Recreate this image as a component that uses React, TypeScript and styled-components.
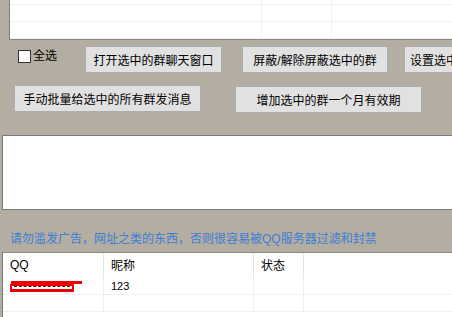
import styled, { createGlobalStyle } from 'styled-components';

const GlobalStyle = createGlobalStyle`
  html, body {
    margin: 0;
    padding: 0;
    background: #b3ada2;
  }
  body {
    font-family: "Liberation Sans", "Noto Sans CJK SC", sans-serif;
    font-size: 12px;
    color: #000;
  }
`;

const Page = styled.div`
  width: 452px;
  height: 317px;
  overflow: hidden;
  display: flex;
  flex-direction: column;
`;

const TopGrid = styled.div`
  margin-left: 9px;
  width: 460px;
  height: 39px;
  border-left: 1px solid #7c7c7c;
  border-bottom: 1px solid #8a8a8a;
  background: #fff;
  display: flex;
  flex-direction: column;
  justify-content: flex-end;
  overflow: hidden;
`;

const GridRow = styled.div`
  display: flex;
  flex: 0 0 17px;
  box-sizing: border-box;
  border-bottom: 1px solid #f0f0f0;
`;

const Cell = styled.div<{ $w?: number }>`
  box-sizing: border-box;
  flex: ${(p) => (p.$w ? `0 0 ${p.$w}px` : '1')};
  border-right: ${(p) => (p.$w ? '1px solid #f0f0f0' : 'none')};
  padding-left: 7px;
  display: flex;
  align-items: center;
  white-space: nowrap;
  position: relative;
`;

const ButtonRow = styled.div<{ $top: number; $left: number }>`
  display: flex;
  align-items: flex-start;
  margin-top: ${(p) => p.$top}px;
  padding-left: ${(p) => p.$left}px;
  white-space: nowrap;
`;

const CheckLabel = styled.label`
  display: flex;
  align-items: center;
  gap: 2px;
  margin-top: 3px;
  margin-right: 28px;
  font-size: 12px;
  line-height: 14px;
`;

const CheckBox = styled.span`
  display: inline-block;
  width: 13px;
  height: 13px;
  box-sizing: border-box;
  border: 1px solid #333;
  background: #fff;
`;

const Button = styled.button<{ $w: number; $gap?: number; $dy?: number }>`
  flex: 0 0 ${(p) => p.$w}px;
  width: ${(p) => p.$w}px;
  height: 27px;
  margin: ${(p) => p.$dy || 0}px ${(p) => p.$gap || 0}px 0 0;
  padding: 0;
  border: 1px solid #adadad;
  background: #e1e1e1;
  font-family: "Liberation Sans", "Noto Sans CJK SC", sans-serif;
  font-size: 12px;
  color: #000;
  text-align: center;
  white-space: nowrap;
  overflow: hidden;
`;

const ClippedButton = styled(Button)`
  text-align: left;
  padding-left: 5px;
  border-right: none;
`;

const MessageBox = styled.div`
  margin: 22px 0 0 2px;
  width: 470px;
  height: 75px;
  box-sizing: border-box;
  border: 1px solid #7a7a7a;
  border-right: none;
  background: #fff;
`;

const Warning = styled.div`
  margin: 20px 0 0 10px;
  height: 22px;
  line-height: 18px;
  color: #3a7fd6;
  font-size: 12px;
  white-space: nowrap;
`;

const BottomGrid = styled.div`
  margin-left: 2px;
  width: 470px;
  flex: 1;
  border-left: 1px solid #7a7a7a;
  border-top: 1px solid #8a8a8a;
  background: #fff;
  display: flex;
  flex-direction: column;
`;

const HeaderRow = styled.div`
  display: flex;
  flex: 0 0 25px;
`;

const HeaderCell = styled.div<{ $w?: number }>`
  box-sizing: border-box;
  flex: ${(p) => (p.$w ? `0 0 ${p.$w}px` : '1')};
  border-right: ${(p) => (p.$w ? '1px solid #e3e3e3' : 'none')};
  padding: 0 0 2px 7px;
  display: flex;
  align-items: center;
  white-space: nowrap;
`;

const Redacted = styled.div`
  position: absolute;
  left: 0;
  top: 0;
  width: 80px;
  height: 17px;
`;

const RedBar = styled.div<{ $x: number; $y: number; $w: number; $h: number }>`
  position: absolute;
  left: ${(p) => p.$x}px;
  top: ${(p) => p.$y}px;
  width: ${(p) => p.$w}px;
  height: ${(p) => p.$h}px;
  background: #ee0000;
`;

const RedBox = styled.div`
  position: absolute;
  left: 7px;
  top: 6px;
  width: 64px;
  height: 8px;
  box-sizing: border-box;
  border: 2px solid #ee0000;
  border-bottom-width: 3px;
  background: #fff;
  &::after {
    content: '';
    position: absolute;
    left: 2px;
    right: 2px;
    top: 0;
    border-top: 1px dashed #222;
  }
`;

export default function App() {
  const topCols = [252, 70];
  const bottomCols = [101, 150, 50];

  return (
    <>
      <GlobalStyle />
      <Page>
        <TopGrid>
          {[0, 1, 2].map((r) => (
            <GridRow key={r}>
              {topCols.map((w, i) => (
                <Cell key={i} $w={w} />
              ))}
              <Cell />
            </GridRow>
          ))}
        </TopGrid>

        <ButtonRow $top={6} $left={18}>
          <CheckLabel>
            <CheckBox />
            全选
          </CheckLabel>
          <Button $w={137} $gap={20}>打开选中的群聊天窗口</Button>
          <Button $w={146} $gap={16}>屏蔽/解除屏蔽选中的群</Button>
          <ClippedButton $w={60}>设置选中的群</ClippedButton>
        </ButtonRow>

        <ButtonRow $top={12} $left={14}>
          <Button $w={187} $gap={34}>手动批量给选中的所有群发消息</Button>
          <Button $w={187} $dy={1}>增加选中的群一个月有效期</Button>
        </ButtonRow>

        <MessageBox />

        <Warning>请勿滥发广告，网址之类的东西，否则很容易被QQ服务器过滤和封禁</Warning>

        <BottomGrid>
          <HeaderRow>
            <HeaderCell $w={101}>QQ</HeaderCell>
            <HeaderCell $w={150}>昵称</HeaderCell>
            <HeaderCell $w={50}>状态</HeaderCell>
            <HeaderCell />
          </HeaderRow>
          {[0, 1].map((r) => (
            <GridRow key={r}>
              {bottomCols.map((w, i) => (
                <Cell key={i} $w={w}>
                  {r === 0 && i === 0 && (
                    <Redacted>
                      <RedBar $x={8} $y={3} $w={71} $h={3} />
                      <RedBox />
                    </Redacted>
                  )}
                  {r === 0 && i === 1 && <span style={{ fontSize: 11 }}>123</span>}
                </Cell>
              ))}
              <Cell />
            </GridRow>
          ))}
        </BottomGrid>
      </Page>
    </>
  );
}
